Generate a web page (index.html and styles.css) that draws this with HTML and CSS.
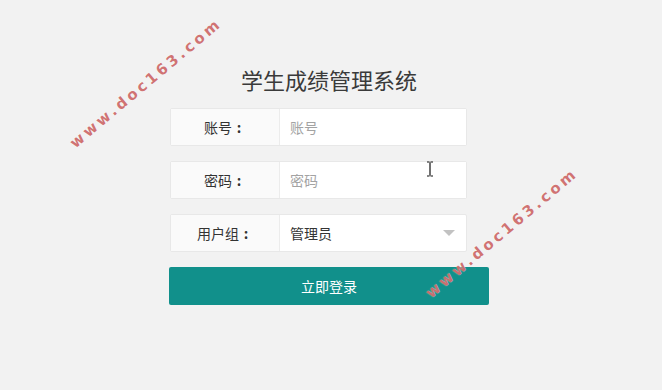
FILE: index.html
```html
<!DOCTYPE html>
<html lang="zh-CN">

<head>
    <meta charset="UTF-8">
    <meta name="viewport" content="width=device-width, initial-scale=1.0">
    <title>学生成绩管理系统</title>
    <link rel="stylesheet" href="styles.css">
</head>

<body>
    <div id="login-box">
        <h2 class="login-title">学生成绩管理系统</h2>
        <form class="login-form" onsubmit="return false">
            <div class="form-item">
                <label class="form-label">账号<span class="colon">:</span></label>
                <input class="form-input" type="text" placeholder="账号">
            </div>
            <div class="form-item">
                <label class="form-label">密码<span class="colon">:</span></label>
                <input class="form-input" type="password" placeholder="密码">
            </div>
            <div class="form-item">
                <label class="form-label">用户组<span class="colon">:</span></label>
                <div class="form-select">
                    <span>管理员</span>
                    <i class="select-arrow"></i>
                </div>
            </div>
            <button class="login-btn" type="submit">立即登录</button>
        </form>
    </div>

    <svg class="ibeam" width="8" height="16" viewBox="0 0 8 16">
        <path d="M1 1h2.5M4.5 1H7M4 1.5v13M1 15h2.5M4.5 15H7" stroke="#111" stroke-width="1.2" fill="none" />
    </svg>

    <div class="watermark wm-1">www.doc163.com</div>
    <div class="watermark wm-2">www.doc163.com</div>
</body>

</html>
```

FILE: styles.css
```css
body {
    margin: 0;
    padding: 0 4px 0 0;
    height: 390px;
    background-color: #f2f2f2;
    font-family: "Noto Sans CJK SC", "Liberation Sans", sans-serif;
    font-size: 14px;
    color: #333;
    overflow: hidden;
    position: relative;
}

#login-box {
    width: 320px;
    margin: 0 auto;
    padding-top: 64px;
}

.login-title {
    margin: 0 0 14px;
    text-align: center;
    font-size: 22px;
    font-weight: 400;
    line-height: 30px;
    color: #3a3a3a;
}

.form-item {
    display: flex;
    width: 297px;
    height: 38px;
    margin: 0 0 15px 1px;
    box-sizing: border-box;
    border: 1px solid #e8e8e8;
    border-radius: 2px;
    background-color: #fff;
}

.form-label {
    width: 108px;
    flex-shrink: 0;
    background-color: #fafafa;
    border-right: 1px solid #ececec;
    text-align: center;
    line-height: 36px;
    color: #333;
}

/* colon sits in the middle of a full-width cell */
.colon {
    display: inline-block;
    width: 14px;
    text-align: center;
    font-weight: bold;
}

.form-input {
    flex: 1;
    border: none;
    outline: none;
    padding: 0 10px;
    font-family: inherit;
    font-size: 14px;
    color: #333;
    background: #fff;
}

.form-input::placeholder {
    color: #a3a3a3;
}

.form-select {
    flex: 1;
    display: flex;
    align-items: center;
    justify-content: space-between;
    padding: 0 10px;
    color: #333;
}

.select-arrow {
    width: 0;
    height: 0;
    margin-right: 1px;
    border-left: 6px solid transparent;
    border-right: 6px solid transparent;
    border-top: 6px solid #c2c2c2;
}

.login-btn {
    display: block;
    width: 320px;
    height: 38px;
    margin-top: 1px;
    border: none;
    border-radius: 2px;
    background-color: #11908b;
    color: #fff;
    font-family: inherit;
    font-size: 14px;
    cursor: pointer;
}

.ibeam {
    position: absolute;
    left: 426px;
    top: 161px;
}

.watermark {
    position: absolute;
    font-family: "DejaVu Sans", sans-serif;
    font-weight: bold;
    font-size: 15px;
    letter-spacing: 3.2px;
    color: rgba(200, 90, 90, 0.85);
    text-shadow: 0 0 1px rgba(255, 255, 255, 0.8);
    transform: rotate(-40deg);
    transform-origin: left center;
    white-space: nowrap;
}

.wm-1 {
    left: 72px;
    top: 136px;
}

.wm-2 {
    left: 428px;
    top: 286px;
}
```
